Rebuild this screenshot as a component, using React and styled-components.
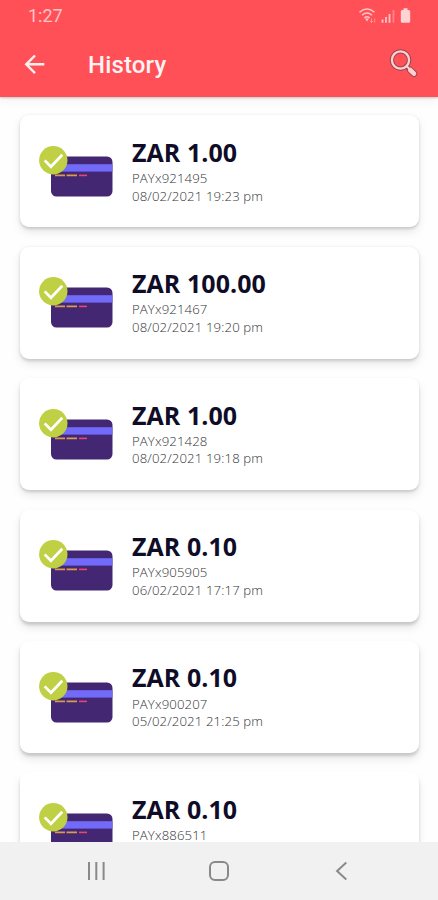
import React from "react";
import styled, { createGlobalStyle } from "styled-components";

const GlobalStyle = createGlobalStyle`
  * { box-sizing: border-box; }
  body { margin: 0; background: #fff; }
`;

const Screen = styled.main`
  width: 438px;
  height: 900px;
  display: flex;
  flex-direction: column;
  overflow: hidden;
  background: #fefefe;
`;

const Header = styled.header`
  flex: none;
  height: 97px;
  background: #ff5058;
  box-shadow: 0 1px 2px rgba(0, 0, 0, 0.2), 0 4px 9px rgba(0, 0, 0, 0.05);
  z-index: 1;
`;

const StatusBar = styled.div`
  height: 32px;
  padding: 0 26px 0 28px;
  display: flex;
  align-items: center;
  justify-content: space-between;
`;

const Clock = styled.span`
  font: 400 18px/32px Roboto, sans-serif;
  color: #ffc4c7;
`;

const StatusIcons = styled.svg`
  width: 54px;
  height: 18px;
  display: block;
  margin-top: -1px;
`;

const Toolbar = styled.div`
  height: 65px;
  padding: 0 18px 0 22px;
  display: flex;
  align-items: center;
`;

const Title = styled.h1`
  flex: 1;
  margin: 0 0 0 40px;
  font: 500 24px/32px Roboto, sans-serif;
  letter-spacing: 0.15px;
  color: #fff3f3;
`;

const Icon = styled.svg`
  display: block;
  flex: none;
`;

const SearchIcon = styled(Icon)`
  margin-top: -1px;
`;

const List = styled.section`
  flex: 1;
  min-height: 0;
  overflow: hidden;
  padding: 18.4px 19px 0 20px;
  display: flex;
  flex-direction: column;
  gap: 19.4px;
`;

const Card = styled.article`
  flex: none;
  height: 112px;
  border-radius: 9px;
  background: #fff;
  display: flex;
  padding: 0 0 0 18px;
  box-shadow: 0 ${(p) => p.$lift}px 3px rgba(0, 0, 0, 0.15),
    0 ${(p) => p.$lift + 3}px 10px rgba(0, 0, 0, 0.09);
`;

const CardArt = styled.svg`
  display: block;
  width: 76px;
  height: 55px;
  margin-top: 28.6px;
`;

const Details = styled.div`
  margin-left: 18px;
  padding-top: 19.4px;
  white-space: nowrap;
`;

const Amount = styled.h2`
  margin: 0 0 1.2px;
  font: 700 25px/34px "Open Sans", sans-serif;
  letter-spacing: 0.06px;
  color: #0f0c28;
`;

const Line = styled.p`
  margin: 0;
  font: 300 13.2px/17.6px "Open Sans", sans-serif;
  letter-spacing: 0.12px;
  color: #333338;
`;

const NavBar = styled.nav`
  flex: none;
  height: 58px;
  background: #f1f1f1;
  display: flex;
  align-items: center;
  justify-content: space-between;
  padding: 0 85px 0 84px;
  z-index: 1;
`;

const payments = [
  { amount: "ZAR 1.00", reference: "PAYx921495", date: "08/02/2021 19:23 pm", lift: 1.4 },
  { amount: "ZAR 100.00", reference: "PAYx921467", date: "08/02/2021 19:20 pm", lift: 1.7 },
  { amount: "ZAR 1.00", reference: "PAYx921428", date: "08/02/2021 19:18 pm", lift: 2 },
  { amount: "ZAR 0.10", reference: "PAYx905905", date: "06/02/2021 17:17 pm", lift: 2.4 },
  { amount: "ZAR 0.10", reference: "PAYx900207", date: "05/02/2021 21:25 pm", lift: 2.8 },
  { amount: "ZAR 0.10", reference: "PAYx886511", lift: 3.2 },
];

function PaidCard() {
  return (
    <CardArt viewBox="0 0 76 55">
      <rect x="13" y="12.5" width="61.5" height="40" rx="5.5" fill="#432772" />
      <rect x="13" y="20.2" width="61.5" height="7.4" fill="#726bfa" />
      <path d="M17 31.4h10M28.5 31.4h10.5" stroke="#dc9a51" strokeWidth="1.6" />
      <path d="M41 31.4h8" stroke="#e5476f" strokeWidth="1.6" />
      <circle cx="15.3" cy="16.3" r="14.2" fill="#bfd045" />
      <path d="M6.7 16.4l6.2 6.4L24.3 10.8" fill="none" stroke="#fff" strokeWidth="2.7" />
    </CardArt>
  );
}

export default function App() {
  return (
    <Screen>
      <GlobalStyle />
      <Header>
        <StatusBar>
          <Clock>1:27</Clock>
          <StatusIcons viewBox="0 0 54 18">
            <g fill="none" stroke="#ffc4c7" strokeWidth="1.5">
              <path d="M1.5 5.2Q9 -1.2 16.5 5.2M4 8.2Q9 3.8 14 8.2M6.3 11Q9 8.6 11.7 11" />
            </g>
            <path d="M7 11.6h4L9 14.5z" fill="#ffc4c7" />
            <path d="M13.5 11.5v4M12 14l1.5 1.6L15 14M16.7 15.5v-4" fill="none" stroke="#ff9ca1" strokeWidth="0.9" />
            <path d="M24.5 12.5v3.2M28 10v5.7M31.5 7v8.7" stroke="#ffc4c7" strokeWidth="1.8" />
            <path d="M35.5 3v12.7" stroke="#ff858b" strokeWidth="1.8" />
            <path d="M45.5 1.3h4v1.6h1.2q1.5 0 1.5 1.5v9.8q0 1.5-1.5 1.5h-6.4q-1.5 0-1.5-1.5V4.4q0-1.5 1.5-1.5h1.2z" fill="#ffd2d4" />
          </StatusIcons>
        </StatusBar>
        <Toolbar>
          <Icon width="26" height="26" viewBox="0 0 26 26">
            <path d="M22.3 12.3H4.5M13 3.5L4.2 12.3l8.8 8.8" fill="none" stroke="#fff0f0" strokeWidth="2.4" />
          </Icon>
          <Title>History</Title>
          <SearchIcon width="32" height="32" viewBox="0 0 32 32">
            <g fill="none" strokeLinecap="round">
              <path d="M18 18l3 3" stroke="#9c444b" strokeWidth="4" />
              <path d="M22.2 22l3.800 3.700" stroke="#9c444b" strokeWidth="6.600" />
              <circle cx="12.500" cy="12" r="8.600" stroke="#9c444b" strokeWidth="4.300" />
              <circle cx="12.500" cy="12" r="8.600" stroke="#ffd0d2" strokeWidth="2.300" />
              <path d="M19 18.500l2 2" stroke="#ffd0d2" strokeWidth="1.800" />
              <path d="M22.200 22l3.800 3.700" stroke="#ffd0d2" strokeWidth="4.600" />
            </g>
          </SearchIcon>
        </Toolbar>
      </Header>
      <List>
        {payments.map(({ amount, reference, date, lift }) => (
          <Card key={reference} $lift={lift}>
            <PaidCard />
            <Details>
              <Amount>{amount}</Amount>
              <Line>{reference}</Line>
              {date && <Line>{date}</Line>}
            </Details>
          </Card>
        ))}
      </List>
      <NavBar>
        <Icon width="25" height="24" viewBox="0 0 25 24">
          <path d="M5 3v18M12.3 3v18M19.6 3v18" stroke="#898989" strokeWidth="2" />
        </Icon>
        <Icon width="24" height="24" viewBox="0 0 24 24">
          <rect x="3" y="3" width="18" height="18" rx="5" fill="none" stroke="#898989" strokeWidth="2" />
        </Icon>
        <Icon width="24" height="24" viewBox="0 0 24 24">
          <path d="M17.3 3.5L8.1 12l9.2 8.5" fill="none" stroke="#898989" strokeWidth="2" />
        </Icon>
      </NavBar>
    </Screen>
  );
}
